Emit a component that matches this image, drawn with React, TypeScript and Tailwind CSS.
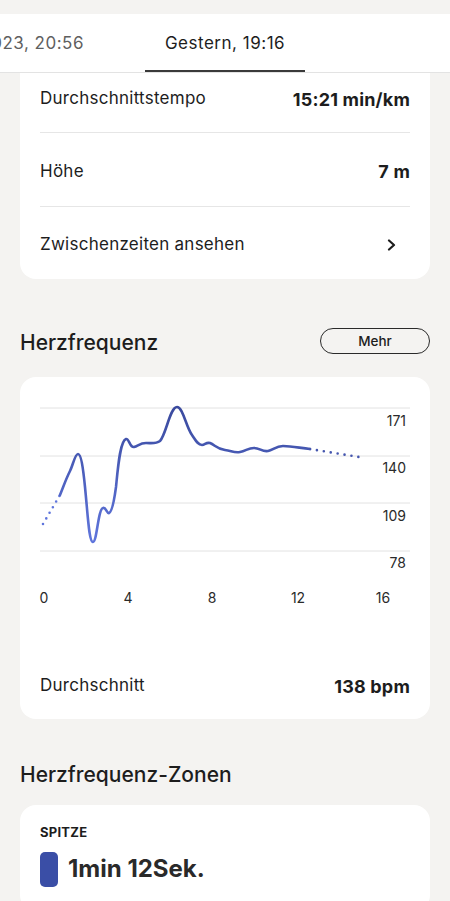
export default function App() {
  return (
    <div className="w-[450px] h-[901px] overflow-hidden bg-[#f4f3f1] font-['Inter','Noto_Sans',sans-serif] text-[#1d1d1d]">
      <div className="h-[14px]" />

      {/* tabs */}
      <div className="h-[59px] bg-white border-b border-[#e3e3e3] flex items-end overflow-hidden">
        <div className="flex ml-[-31px] gap-[41px]">
          <div className="w-[135px] pr-5 pb-[16px] text-right text-[17px] tracking-[0.03em] text-[#5f5f5f] whitespace-nowrap">2023, 20:56</div>
          <div className="w-[160px] pb-[14px] text-center text-[17px] tracking-[0.03em] text-[#1d1d1d] whitespace-nowrap border-b-2 border-[#3a3a3a]">
            Gestern, 19:16
          </div>
        </div>
      </div>

      {/* stats card */}
      <div className="mx-5 bg-white rounded-b-[16px] px-5">
        <div className="h-[60px] pb-[7px] flex items-center justify-between border-b border-[#e6e6e6]">
          <span className="text-[17px] tracking-[0.015em]">Durchschnittstempo</span>
          <span className="text-[18px] font-bold tracking-[0.01em]">15:21 min/km</span>
        </div>
        <div className="h-[74px] pt-1 flex items-center justify-between border-b border-[#e6e6e6]">
          <span className="text-[17px] tracking-[0.015em]">Höhe</span>
          <span className="text-[18px] font-bold tracking-[0.01em]">7 m</span>
        </div>
        <div className="h-[72px] pt-1 flex items-center justify-between">
          <span className="text-[17px] tracking-[0.015em]">Zwischenzeiten ansehen</span>
          <svg width="10" height="12" viewBox="0 0 10 12" className="mr-[13px]">
            <polyline points="2,1.5 7,6 2,10.5" fill="none" stroke="#1d1d1d" strokeWidth="2.2" strokeLinecap="round" strokeLinejoin="round" />
          </svg>
        </div>
      </div>

      {/* heart rate header */}
      <div className="mx-5 mt-[49px] flex items-center justify-between h-[26px]">
        <h2 className="text-[21px] font-medium pt-[3px]">Herzfrequenz</h2>
        <button className="w-[110px] h-[26px] rounded-full border border-[#2a2a2a] text-[13.5px] font-medium">Mehr</button>
      </div>

      {/* chart card */}
      <div className="mx-5 mt-[23px] bg-white rounded-[16px] pb-[21px]">
        <svg width="410" height="240" viewBox="0 0 410 240" className="block">
          <defs>
            <linearGradient id="hr" x1="0" y1="30" x2="0" y2="165" gradientUnits="userSpaceOnUse">
              <stop offset="0" stopColor="#3a4a9e" />
              <stop offset="1" stopColor="#5f75dc" />
            </linearGradient>
          </defs>
          {[31, 79, 126, 174].map((y) => (
            <line key={y} x1="20" x2="390" y1={y} y2={y} stroke="#e2e2e2" strokeWidth="1" />
          ))}
          <g fontFamily="Inter, sans-serif" fontSize="14" fill="#2a2a2a" textAnchor="end">
            <text x="386" y="49">171</text>
            <text x="386" y="96">140</text>
            <text x="386" y="144">109</text>
            <text x="386" y="191">78</text>
          </g>
          <g fontFamily="Inter, sans-serif" fontSize="14" fill="#2a2a2a" textAnchor="middle">
            <text x="24" y="226">0</text>
            <text x="108" y="226">4</text>
            <text x="192" y="226">8</text>
            <text x="278" y="226">12</text>
            <text x="363" y="226">16</text>
          </g>
          <path d="M23,147 L40,118" stroke="#5f75dc" strokeWidth="2.6" strokeLinecap="round" strokeDasharray="0 6.5" fill="none" />
          <path
            d="M40,118 C44,108 46,102 50,94 C53,88 55,77 58,77 C61,77 63,90 65,110 C68,140 69,165 73,165 C77,165 78,132 83,131 C86,130 87,137 89,136 C92,135 94,125 96,110 C98,90 100,64 106,62 C109,61 110,71 114,70 C118,69 120,66 126,66 C132,66 136,67 140,64 C146,58 150,30 157,30 C163,30 166,50 172,58 C176,64 178,68 182,68 C185,68 186,65 190,66 C195,68 197,72 205,73 C212,74 214,76 220,75 C226,74 228,71 234,71 C240,71 242,75 248,74 C253,73 256,69 263,69 C272,69 280,71 290,72"
            stroke="url(#hr)"
            strokeWidth="2.6"
            strokeLinecap="round"
            fill="none"
          />
          <path d="M290,72 L345,81" stroke="#4556ae" strokeWidth="2.6" strokeLinecap="round" strokeDasharray="0 7" fill="none" />
        </svg>
        <div className="mt-[57px] mx-5 flex items-center justify-between h-[24px]">
          <span className="text-[17px] tracking-[0.015em]">Durchschnitt</span>
          <span className="text-[18px] font-bold tracking-[0.01em]">138 bpm</span>
        </div>
      </div>

      <h2 className="mx-5 mt-[40px] h-[28px] leading-[32px] text-[21px] font-medium">Herzfrequenz-Zonen</h2>

      <div className="mx-5 mt-[18px] bg-white rounded-[16px] px-5 pt-[19px] pb-6">
        <div className="text-[13px] font-bold tracking-[0.02em] leading-4">SPITZE</div>
        <div className="mt-[11px] flex items-center gap-[10px]">
          <div className="w-[18px] h-[35px] rounded-[5px] bg-[#3a4ea6]" />
          <span className="text-[24px] font-bold text-[#2a2a2a]">1min 12Sek.</span>
        </div>
      </div>
    </div>
  );
}
